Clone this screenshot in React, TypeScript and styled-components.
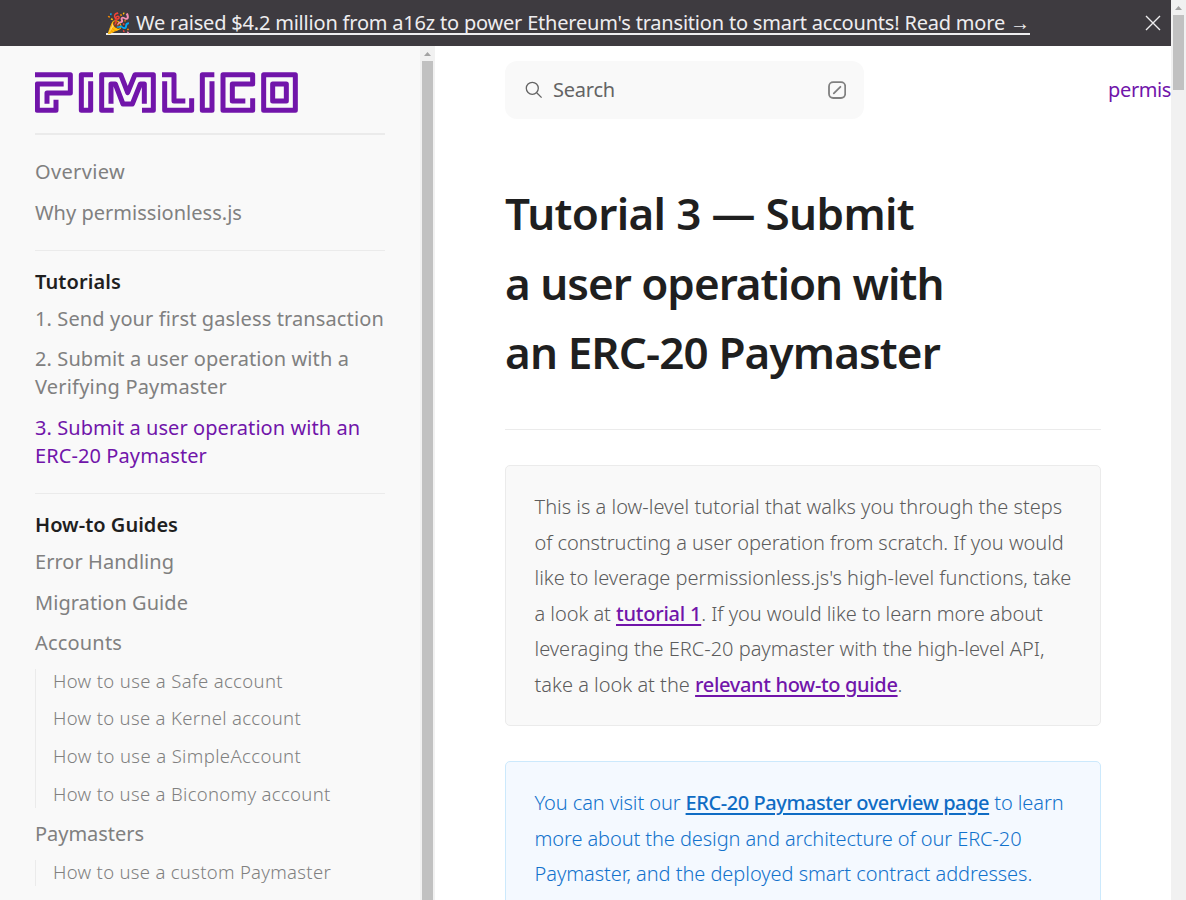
import React from "react";
import styled, { createGlobalStyle } from "styled-components";

const purple = "#7115aa";
const family = `"Noto Sans", "Open Sans", sans-serif`;

const Global = createGlobalStyle`
  * { box-sizing: border-box; }
  html, body { margin: 0; height: 100%; overflow: hidden; }
  body { background: #fff; font: 400 20px/28px ${family}; color: #1f1f1f; }
  a { color: inherit; text-decoration: none; }
`;

const Screen = styled.div`
  display: flex;
  width: 1186px;
  height: 900px;
  overflow: hidden;
`;

const Page = styled.div`
  flex: 1;
  min-width: 0;
  display: flex;
  flex-direction: column;
`;

const Text = styled.span<{ $ls?: number }>`
  letter-spacing: ${(p) => p.$ls ?? 0}px;
  white-space: nowrap;
`;

const Line = styled(Text)`
  display: block;
`;

/* Banner */
const Banner = styled.header`
  height: 46px;
  flex: none;
  display: flex;
  align-items: flex-start;
  padding: 8px 9px 0 106px;
  background: #3e3b40;
  color: #eeedef;
`;

const BannerLink = styled.a`
  display: flex;
  gap: 6px;
  height: 27px;
  line-height: 30px;
  border-bottom: 2px solid #eeedef;
`;

const Emoji = styled.span`
  width: 24px;
  white-space: nowrap;
`;

const CloseButton = styled.button`
  margin: 6px 0 0 auto;
  padding: 0;
  border: 0;
  background: none;
  color: inherit;
  width: 18px;
  height: 18px;
  svg { display: block; }
`;

/* Scrollbars */
const Scrollbar = styled.div`
  flex: none;
  width: 15px;
  background: #f1f1f1;
  display: flex;
  flex-direction: column;
  align-items: center;
  svg { display: block; flex: none; }
`;

const Thumb = styled.div<{ $h?: number }>`
  width: 11px;
  background: #c1c1c1;
  ${(p) => (p.$h ? `height: ${p.$h}px;` : "flex: 1;")}
`;

/* Sidebar */
const Body = styled.div`
  flex: 1;
  min-height: 0;
  display: flex;
`;

const Sidebar = styled.aside`
  width: 435px;
  flex: none;
  display: flex;
  background: #f9f9f9;
  overflow: hidden;
`;

const SidebarContent = styled.nav`
  flex: 1;
  padding: 26px 35px 0;
  color: #808080;
`;

const LogoArea = styled.div`
  height: 63px;
  border-bottom: 2px solid #ebebeb;
  svg { display: block; }
`;

const Group = styled.section<{ $top: number; $bottom?: number; $line?: boolean }>`
  display: flex;
  flex-direction: column;
  gap: 12.6px;
  padding: ${(p) => p.$top}px 0 ${(p) => p.$bottom ?? 0}px;
  ${(p) => p.$line && "border-top: 1px solid #ebebeb;"}
`;

const GroupTitle = styled.div`
  font-weight: 600;
  color: #1f1f1f;
  margin-bottom: -3.6px;
`;

const Item = styled.a<{ $active?: boolean }>`
  display: block;
  ${(p) => p.$active && `&& { color: ${purple}; }`}
`;

const SubList = styled.div`
  border-left: 1px solid #ebebeb;
  padding: 0 0 2px 17px;
  margin-top: -1.2px;
  display: flex;
  flex-direction: column;
  gap: 13.7px;
  font-weight: 300;
  font-size: 18.5px;
  line-height: 24px;
`;

/* Main */
const Main = styled.main`
  flex: 1;
  min-width: 0;
  padding: 15px 0 0 70px;
  overflow: hidden;
`;

const TopBar = styled.div`
  display: flex;
  justify-content: space-between;
  align-items: center;
  height: 58px;
  color: ${purple};
`;

const Search = styled.div`
  width: 359px;
  height: 58px;
  border-radius: 12px;
  background: #f9f9f9;
  display: flex;
  align-items: center;
  padding: 0 18px 0 20px;
  color: #646464;
`;

const SearchLabel = styled(Text)`
  flex: 1;
  margin-left: 10px;
`;

const Article = styled.article`
  width: 596px;
`;

const Title = styled.h1`
  margin: 60px 0 0;
  padding-bottom: 41.5px;
  border-bottom: 1px solid #ebebeb;
  font-size: 44px;
  font-weight: 600;
  line-height: 69.5px;
  color: #1f1f1f;
`;

const Callout = styled.div<{ $info?: boolean }>`
  margin-top: 35px;
  padding: 23px 29px 22.4px 28.5px;
  border: 1px solid ${(p) => (p.$info ? "#cce9fc" : "#ebebeb")};
  border-radius: 5px;
  background: ${(p) => (p.$info ? "#f4f9ff" : "#f9f9f9")};
  color: ${(p) => (p.$info ? "#1272cc" : "#5c5c5c")};
  font-weight: 300;
  line-height: 35.6px;
`;

const Link = styled.a<{ $ls: number; $info?: boolean }>`
  && { color: ${(p) => (p.$info ? "#0f6cc4" : purple)}; }
  font-weight: 500;
  letter-spacing: ${(p) => p.$ls}px;
  text-decoration: underline;
  text-decoration-thickness: 2px;
  text-underline-offset: 3px;
`;

const Logo = () => (
  <svg width="263" height="41" viewBox="45 36 789 123" fill="none" stroke={purple} strokeWidth="15" strokeLinejoin="round">
    <path d="M45 44H151V99H81V131M131 72H52V151H108V119" />
    <path d="M219 44H184V151H212V64" />
    <path d="M281 151H245V44H302L323 98L345 44H400V151H366" />
    <path d="M273 131V72H286L309 132H337L361 72H373V131" />
    <path d="M426 44H462V123H496M434 64V151H515V115" />
    <path d="M583 44H547V151H576V64" />
    <path d="M698 115V151H609V44H698V72H637V123H676" />
    <path d="M731 44H826V151H731ZM758 72H799V123H758Z" />
  </svg>
);

const Arrow = () => (
  <svg width="15" height="15" viewBox="0 0 15 15" fill="#a3a3a3">
    <path d="M4 10L7.5 6L11 10Z" />
  </svg>
);

export default function App() {
  return (
    <Screen>
      <Global />
      <Page>
        <Banner>
          <BannerLink href="#">
            <Emoji>🎉</Emoji>
            <Text $ls={-0.2}>We raised $4.2 million from a16z to power Ethereum's transition to smart accounts! Read more →</Text>
          </BannerLink>
          <CloseButton aria-label="Close">
            <svg width="18" height="18" viewBox="0 0 18 18" stroke="currentColor" strokeWidth="1.4" fill="none">
              <path d="M2 2L16 16M16 2L2 16" />
            </svg>
          </CloseButton>
        </Banner>
        <Body>
          <Sidebar>
            <SidebarContent>
              <LogoArea><Logo /></LogoArea>
              <Group $top={23} $bottom={23}>
                <Item href="#"><Line $ls={0.35}>Overview</Line></Item>
                <Item href="#"><Line $ls={0.02}>Why permissionless.js</Line></Item>
              </Group>
              <Group $top={17} $bottom={23.2} $line>
                <GroupTitle><Line $ls={0.09}>Tutorials</Line></GroupTitle>
                <Item href="#"><Line $ls={0.12}>1. Send your first gasless transaction</Line></Item>
                <Item href="#"><Line $ls={0.1}>2. Submit a user operation with a</Line><Line $ls={0.2}>Verifying Paymaster</Line></Item>
                <Item href="#" $active><Line $ls={0.06}>3. Submit a user operation with an</Line><Line $ls={0.09}>ERC-20 Paymaster</Line></Item>
              </Group>
              <Group $top={17} $line>
                <GroupTitle><Line $ls={0.02}>How-to Guides</Line></GroupTitle>
                <Item href="#"><Line $ls={0.04}>Error Handling</Line></Item>
                <Item href="#"><Line $ls={0.04}>Migration Guide</Line></Item>
                <Item href="#"><Line $ls={0.18}>Accounts</Line></Item>
                <SubList>
                  <Item href="#"><Line $ls={0.34}>How to use a Safe account</Line></Item>
                  <Item href="#"><Line $ls={0.32}>How to use a Kernel account</Line></Item>
                  <Item href="#"><Line $ls={0.37}>How to use a SimpleAccount</Line></Item>
                  <Item href="#"><Line $ls={0.32}>How to use a Biconomy account</Line></Item>
                </SubList>
                <Item href="#"><Line $ls={-0.04}>Paymasters</Line></Item>
                <SubList>
                  <Item href="#"><Line $ls={0.3}>How to use a custom Paymaster</Line></Item>
                </SubList>
              </Group>
            </SidebarContent>
            <Scrollbar><Arrow /><Thumb /></Scrollbar>
          </Sidebar>
          <Main>
            <TopBar>
              <Search>
                <svg width="18" height="18" viewBox="0 0 18 18" fill="none" stroke="currentColor" strokeWidth="1.3">
                  <circle cx="7.3" cy="7.3" r="6" /><path d="M11.7 11.7L16.6 16.6" />
                </svg>
                <SearchLabel $ls={-0.22}>Search</SearchLabel>
                <svg width="18" height="18" viewBox="0 0 18 18" fill="none" stroke="#808080" strokeWidth="1.8" strokeLinecap="round">
                  <rect x="1" y="1.2" width="16.2" height="15.8" rx="4.2" /><path d="M5.8 12.4L12.4 5.8" />
                </svg>
              </Search>
              <Text $ls={-0.4}>permis</Text>
            </TopBar>
            <Article>
              <Title>
                <Line $ls={-0.66}>Tutorial 3 — Submit</Line>
                <Line $ls={-1.0}>a user operation with</Line>
                <Line $ls={-0.86}>an ERC-20 Paymaster</Line>
              </Title>
              <Callout>
                <Line $ls={0.01}>This is a low-level tutorial that walks you through the steps</Line>
                <Line $ls={-0.05}>of constructing a user operation from scratch. If you would</Line>
                <Line $ls={-0.02}>like to leverage permissionless.js's high-level functions, take</Line>
                <Line $ls={-0.05}>a look at <Link href="#" $ls={-0.22}>tutorial 1</Link>. If you would like to learn more about</Line>
                <Line $ls={-0.02}>leveraging the ERC-20 paymaster with the high-level API,</Line>
                <Line $ls={0}>take a look at the <Link href="#" $ls={-0.34}>relevant how-to guide</Link>.</Line>
              </Callout>
              <Callout $info>
                <Line $ls={-0.1}>You can visit our <Link href="#" $info $ls={-0.43}>ERC-20 Paymaster overview page</Link> to learn</Line>
                <Line $ls={-0.09}>more about the design and architecture of our ERC-20</Line>
                <Line $ls={-0.05}>Paymaster, and the deployed smart contract addresses.</Line>
                <Line>&nbsp;</Line>
              </Callout>
            </Article>
          </Main>
        </Body>
      </Page>
      <Scrollbar><Arrow /><Thumb $h={75} /></Scrollbar>
    </Screen>
  );
}
